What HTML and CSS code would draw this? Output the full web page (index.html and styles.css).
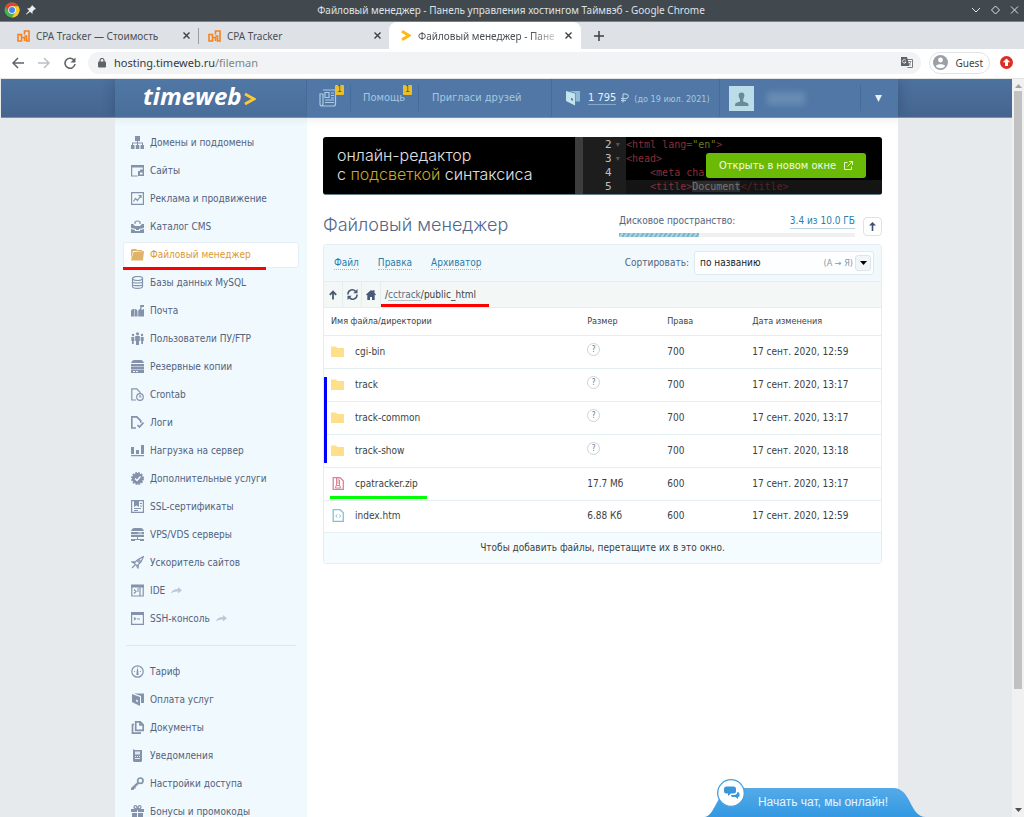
FILE: index.html
```html
<!DOCTYPE html>
<html lang="ru">
<head>
<meta charset="utf-8">
<title>Файловый менеджер - Панель управления хостингом Таймвэб</title>
<link rel="stylesheet" href="styles.css">
</head>
<body>
<header class="titlebar">
  <svg class="chrome" width="16" height="16" viewBox="0 0 16 16"><circle cx="8" cy="8" r="7.5" fill="#4caf50"/><path d="M1.5 4.2A7.5 7.5 0 0 1 14.5 4.2H8L5 9.8z" fill="#e74133"/><path d="M14.5 4.2A7.5 7.5 0 0 1 8 15.5L11.3 9.8 8 4.2z" fill="#fbc926"/><circle cx="8" cy="8" r="3.8" fill="#fff"/><circle cx="8" cy="8" r="3" fill="#4285f4"/></svg>
  <svg class="pin" width="10" height="10" viewBox="0 0 10 10"><path d="M6 0l4 4-1.5.5-2 2L6.500 9 4 6.800.5 9.500 0 9l3.200-3.200L1 3.500l2.500-.2 2-2z" fill="#eee"/></svg>
  <span class="window-title">Файловый менеджер - Панель управления хостингом Таймвэб - Google Chrome</span>
  <svg class="win-buttons" width="50" height="10" viewBox="0 0 50 10" fill="none" stroke="#dfe3e6" stroke-width="1"><path d="M2 3l4 4 4-4M25.500 1l4 4-4 4-4-4zM41 1.500l7 7m0-7l-7 7"/></svg>
</header>
<nav class="tabs">
  <div class="tab tab-plain"><svg width="13" height="12" viewBox="0 0 13 12"><path d="M1 11V4.500h3.500V11zM4.500 11V7.500h3V11M7.500 4.500V1H12v10H9.500V6H7.500" fill="none" stroke="#f58220" stroke-width="1.600"/></svg><span>CPA Tracker — Стоимость</span><button class="close" aria-label="Закрыть"><svg width="7" height="7" viewBox="0 0 7 7"><path d="M.5.5l6 6m0-6l-6 6"/></svg></button></div>
  <div class="tab tab-plain tab-second"><svg width="13" height="12" viewBox="0 0 13 12"><path d="M1 11V4.500h3.500V11zM4.500 11V7.500h3V11M7.500 4.500V1H12v10H9.500V6H7.500" fill="none" stroke="#f58220" stroke-width="1.600"/></svg><span>CPA Tracker</span><button class="close" aria-label="Закрыть"><svg width="7" height="7" viewBox="0 0 7 7"><path d="M.5.5l6 6m0-6l-6 6"/></svg></button></div>
  <div class="tab tab-active"><svg width="10" height="11" viewBox="0 0 10 11"><path d="M1 1.200l7 4.300-7 4.300" fill="none" stroke="#fdb913" stroke-width="2.800"/></svg><span class="fade">Файловый менеджер - Пане</span><button class="close" aria-label="Закрыть"><svg width="7" height="7" viewBox="0 0 7 7"><path d="M.5.5l6 6m0-6l-6 6"/></svg></button></div>
  <button class="new-tab" aria-label="Новая вкладка"><svg width="10" height="10" viewBox="0 0 10 10"><path d="M5 0v10M0 5h10" stroke="#3c4043" stroke-width="1.500"/></svg></button>
</nav>
<div class="addressbar">
  <button class="nav" aria-label="Назад"><svg width="12" height="12" viewBox="0 0 12 12"><path d="M12 6H1M6 1L1 6l5 5" fill="none" stroke="#5f6368" stroke-width="1.500"/></svg></button>
  <button class="nav" aria-label="Вперёд"><svg width="12" height="12" viewBox="0 0 12 12"><path d="M0 6h11M6 1l5 5-5 5" fill="none" stroke="#bcbfc3" stroke-width="1.500"/></svg></button>
  <button class="nav" aria-label="Обновить"><svg width="12" height="12" viewBox="0 0 12 12"><path d="M10.200 3.500A5 5 0 1 0 11 7" fill="none" stroke="#5f6368" stroke-width="1.600"/><path d="M11.500.5v5h-5z" fill="#5f6368"/></svg></button>
  <div class="omnibox">
    <svg width="8" height="10" viewBox="0 0 8 10"><rect y="3.500" width="8" height="6" rx="1" fill="#5f6368"/><path d="M2 4V2.500a2 2 0 0 1 4 0V4" fill="none" stroke="#5f6368" stroke-width="1.200"/></svg>
    <span class="url">hosting.timeweb.ru<span class="url-path">/fileman</span></span>
    <svg class="translate" width="12" height="11" viewBox="0 0 12 11"><path d="M5 2.500h6.500v8H6.500" fill="#fff" stroke="#777b80"/><path d="M0 0h6l2.500 9H0z" fill="#5f6368"/><path d="M4.800 3.300A1.800 1.800 0 1 0 5 5H3.500" fill="none" stroke="#fff" stroke-width=".8"/><path d="M7 4.500h3.500M9.500 4.500c0 2-1 3-2 3.500m.5-2l2 2.500" fill="none" stroke="#777b80" stroke-width=".8"/></svg>
  </div>
  <button class="guest"><svg width="15" height="15" viewBox="0 0 15 15"><circle cx="7.500" cy="7.500" r="7.500" fill="#9aa0a6"/><circle cx="7.500" cy="5" r="2.400" fill="#fff"/><path d="M2.800 11c1-2.500 8.400-2.500 9.400 0-2 3-7.400 3-9.400 0z" fill="#fff"/></svg>Guest</button>
  <button class="update" aria-label="Обновление"><svg width="13" height="13" viewBox="0 0 13 13"><circle cx="6.500" cy="6.500" r="6.500" fill="#d93025"/><path d="M6.500 2.500l3.700 3.700H8V10H5V6.200H2.800z" fill="#fff"/></svg></button>
</div>
<div class="viewport">
<div class="page">
  <header class="site-header">
    <div class="header-inner">
      <a class="logo" href="#">timeweb<svg width="12" height="14" viewBox="0 0 12 14"><path d="M1 2l9 5-9 5" fill="none" stroke="#fecb2f" stroke-width="2.600"/></svg></a>
      <a class="h-item news" href="#" aria-label="Новости"><svg width="18" height="18" viewBox="0 0 18 18" fill="none" stroke="#a9cbe3" stroke-width="1.200"><path d="M4 1h12.500v14q0 2-2 2H3q-2 0-2-2V5h3v10q0 1-1 1.500"/><path d="M6 3.500h4v5H6zM12 4h3M12 6.500h3M12 9h3M6 11h9M6 13.500h9"/></svg><span class="badge">1</span></a>
      <a class="h-item help" href="#">Помощь<span class="badge">1</span></a>
      <a class="h-item invite" href="#">Пригласи друзей</a>
      <div class="h-item balance"><svg width="14" height="16" viewBox="0 0 14 16"><path d="M3 1h11v10.500h-4.500V3z" fill="#8fbbd5"/><path d="M0 1l9 2.500v12L0 11z" fill="#c3e3ee"/><path d="M5 8l2 .7v2L5 10z" fill="#5077a5"/></svg><a class="sum" href="#">1 795</a><svg class="rub" width="8" height="10" viewBox="0 0 8 10"><path d="M2 9.500V1h3a2.300 2.300 0 0 1 0 4.600H0M0 7.600h5" fill="none" stroke="#c1dced"/></svg><small>(до 19 июл. 2021)</small></div>
      <div class="h-item user"><svg class="avatar" width="25" height="25" viewBox="0 0 25 25"><rect width="25" height="25" fill="#bbdde9"/><path d="M10 7.500q2.700-2 5 0 1 2.500-.3 4.500l-.5 1.500v2l4.500 1.500q.8.500.8 3H6q0-2.500.8-3l4.200-1.500v-2l-.7-1.500q-1.200-2-.3-4.500z" fill="#6b8a98"/></svg><i class="hidden-name"></i></div>
      <button class="h-item drop" aria-label="Меню"><svg width="7" height="7" viewBox="0 0 7 7"><path d="M0 0h7L3.500 7z" fill="#e4f0f8"/></svg></button>
    </div>
  </header>
  <div class="container">
    <aside class="sidebar">
      <a href="#"><svg viewBox="0 0 13 13"><path d="M4 0h5v5H4zM0 9h3.500v4H0zM4.800 9h3.500v4H4.800zM9.500 9H13v4H9.500zM6 5h1v4H6zM1 6.500h11V9h-1V7.500H2V9H1z"/></svg>Домены и поддомены</a>
      <a href="#"><svg viewBox="0 0 13 13"><path d="M0 1h13v2.500H0z"/><path class="s" d="M.6 2v10h6M12.400 3v3"/><path d="M7 7h2V5.500h4V12H7z"/><path d="M9 8.500h2.500v2H9z" fill="#f0f9fd"/></svg>Сайты</a>
      <a href="#"><svg viewBox="0 0 13 13"><path class="s" d="M.6.6h11.800v11.800H.6zM2.500 9.500l2-3 2 2 3-4.500M7.500 3.500H10V6"/></svg>Реклама и продвижение</a>
      <a href="#"><svg viewBox="0 0 13 13"><path class="s" d="M4 4V2q2.500-2 5 0v2"/><path d="M0 4h2l2 2h5l2-2h2v4l-5 1v1H5V9L0 8zM0 9l4 1v1h5v-1l4-1v4H0z"/></svg>Каталог CMS</a>
      <a class="current" href="#"><svg viewBox="0 0 13 13"><path d="M0 2l1-1h4l1 1h5v1H2L0 11z"/><path d="M2.500 4L13 3l-1 9.500H0z"/></svg>Файловый менеджер</a>
      <a href="#"><svg viewBox="0 0 13 13"><ellipse class="s" cx="6.500" cy="2.500" rx="5" ry="2"/><path class="s" d="M1.500 2.500v8c0 2.500 10 2.500 10 0v-8M1.500 5.500c0 2 10 2 10 0M1.500 8.200c0 2 10 2 10 0"/></svg>Базы данных MySQL</a>
      <a href="#"><svg viewBox="0 0 13 13"><path d="M0 7.500q0-2.500 2.500-2.500H3v7.500H0zM3.500 5Q6.500 4.500 6.500 7.500v5h-3zM7.200 12.500V6.500l2-2V1H13v2h-2.500v3l2.500-1v7.500z"/></svg>Почта</a>
      <a href="#"><svg viewBox="0 0 13 13"><circle cx="6.500" cy="1.800" r="1.600"/><circle cx="2" cy="3" r="1.200"/><circle cx="11" cy="3" r="1.200"/><path d="M4.200 4h4.600v5H8v4H5V9h-.8zM.3 5h3v4h-.6v3H1V9H.3zM9.700 5h3v4H12v3h-1.700V9h-.6z"/></svg>Пользователи ПУ/FTP</a>
      <a href="#"><svg viewBox="0 0 13 13"><path d="M0 3q1-3 3-3h7q2 0 3 3zM0 4h13v2.400H0zM0 7h13v2.400H0zM0 10h13v3H0z"/><path d="M2 11h2v1H2zM5 11h2v1H5z" fill="#f0f9fd"/></svg>Резервные копии</a>
      <a href="#"><svg viewBox="0 0 13 13"><path class="s" d="M5 12H.8V.8h5l3.700 4" stroke-width="1.500"/><circle class="s" cx="9" cy="9" r="3.300"/><path class="s" d="M9 7v2h1.500"/></svg>Crontab</a>
      <a href="#"><svg viewBox="0 0 13 13"><path class="s bold" d="M5 12H.8V.8h5l4 4v2"/><path class="s bold" d="M6.500 9l2 2 4-4.500"/></svg>Логи</a>
      <a href="#"><svg viewBox="0 0 13 13"><path d="M0 3h3v7H0zM5 6h3v4H5zM10 1h3v9h-3zM0 11h13v1.200H0z"/></svg>Нагрузка на сервер</a>
      <a href="#"><svg viewBox="0 0 13 13"><circle cx="6.500" cy="6.500" r="5.400"/><circle cx="6.500" cy="6.500" r="5.500" fill="none" stroke="#8493ab" stroke-dasharray="1.700 1.180" stroke-width="2"/><path d="M4 6.500l2 2 3.500-4" fill="none" stroke="#fff" stroke-width="1.300"/></svg>Дополнительные услуги</a>
      <a href="#"><svg viewBox="0 0 13 13"><path class="s" d="M.6.6h11.800v11.800H.6zM9 3.500h2M9 6h2M3 8.500h7M3 10.500h4"/><path d="M3 1h5v6L5.500 5.500 3 7z"/></svg>SSL-сертификаты</a>
      <a href="#"><svg viewBox="0 0 13 13"><path d="M0 3q1-3 3-3h7q2 0 3 3zM0 4h13v2.200H0zM0 7h13v2H0zM6 9h1v2h6v2H9v-1H4v1H0v-2h6z"/><path d="M7 4.500h4v1H7z" fill="#d5dee8"/></svg>VPS/VDS серверы</a>
      <a href="#"><svg viewBox="0 0 13 13"><path class="s" d="M3 7L7 3.500 12.500.5 10 6 6 10zM3.500 5.500L1 6l2 1M7.500 9.500L7 12l-1.500-2M1 12l3-3"/><circle class="s" cx="8" cy="5" r="1.200"/></svg>Ускоритель сайтов</a>
      <a href="#"><svg viewBox="0 0 13 13"><path d="M0 .5h13v3H0z"/><path class="s" d="M.8 2v10h11.400V2M9 3v9M3 5.500l2 2-2 2M6 5h2M6 7h2"/></svg>IDE<svg class="ext" viewBox="0 0 11 7"><path d="M0 6.500Q1 2 7 2V0l4 3.200-4 3.300v-2Q3 4 0 6.500z"/></svg></a>
      <a href="#"><svg viewBox="0 0 13 13"><path d="M0 0h13v3H0z"/><path class="s" d="M.6 2v10.300h11.800V2M3 5.500l1.500 1.200L3 8M6 7h3"/></svg>SSH-консоль<svg class="ext" viewBox="0 0 11 7"><path d="M0 6.500Q1 2 7 2V0l4 3.200-4 3.300v-2Q3 4 0 6.500z"/></svg></a>
      <hr>
      <a href="#"><svg viewBox="0 0 13 13"><circle class="s" cx="6.500" cy="6.500" r="5.700"/><path d="M6 4h1l.7 6H5.300z"/><circle cx="3.500" cy="6.500" r=".6"/><circle cx="9.500" cy="6.500" r=".6"/><circle cx="6.500" cy="2.800" r=".6"/></svg>Тариф</a>
      <a href="#"><svg viewBox="0 0 13 13"><path d="M1 1l8 3v9l-8-4zM3 .5h10v9.500h-3V3z"/><path d="M5 6.500l2 .7v2L5 8.500z" fill="#dfe8f0"/></svg>Оплата услуг</a>
      <a href="#"><svg viewBox="0 0 13 13"><path class="s bold" d="M4.700.8h4.500l3 3v5.500H4.700zM9 1v3h3M3 3.500H1.500v8.700H9V11"/></svg>Документы</a>
      <a href="#"><svg viewBox="0 0 13 13"><path d="M2 1q0-1 1-1v1h8v11l-1 1H3l-1-1z"/><path d="M4 2.500h5v3H4zM4 7h1v1H4zM6 7h1v1H6zM8 7h1v1H8zM4 9h5v1H4z" fill="#dfe8f0"/></svg>Уведомления</a>
      <a href="#"><svg viewBox="0 0 13 13"><circle class="s bold" cx="9.300" cy="3.700" r="2.700"/><path d="M6.500 5L8 6.700 4.500 10l.3 1.600H3.300L2.500 13H0v-2z"/></svg>Настройки доступа</a>
      <a href="#"><svg viewBox="0 0 13 13"><path d="M0 4h6v3H0zM7 4h6v3H7zM1 8h5v5H1zM7 8h5v5H7z"/><path class="s" d="M6.500 4Q3 4 3 2t2.500-1l1 3 1-3Q10 0 10 2T6.500 4"/></svg>Бонусы и промокоды</a>
      <i class="mark mark-menu"></i>
    </aside>
    <main class="content">
      <section class="banner">
        <p class="banner-text">онлайн-редактор<br>с <b>подсветкой</b> синтаксиса</p>
        <div class="editor">
          <div class="gutter"><span>2<i>▾</i></span><span>3<i>▾</i></span><span>4</span><span>5</span></div>
          <pre class="code"><span>&lt;html lang<em>=</em><q>"en"</q>&gt;</span><span>&lt;head&gt;</span><span>    &lt;meta cha</span><span class="line">    &lt;title&gt;<mark>Document</mark><s>&lt;/title&gt;</s></span></pre>
          <button class="open">Открыть в новом окне<svg width="9" height="9" viewBox="0 0 9 9"><path d="M3.500 1.500h-3v7h7v-3M5 .5h3.500V4M8.500.5l-5 5" fill="none" stroke="#e8f5d0"/></svg></button>
        </div>
      </section>
      <div class="heading">
        <h1>Файловый менеджер</h1>
        <div class="disk">
          <div class="disk-text"><span>Дисковое пространство:</span><a href="#">3.4 из 10.0 ГБ</a></div>
          <div class="meter"><i></i></div>
        </div>
        <button class="upload" aria-label="Загрузить"><svg width="7" height="9" viewBox="0 0 7 9"><path d="M3.500 0L7 3.500H4.300V9H2.700V3.500H0z" fill="#3d5170"/></svg></button>
      </div>
      <section class="panel">
        <div class="toolbar">
          <a href="#">Файл</a><a href="#">Правка</a><a href="#">Архиватор</a>
          <label for="sort">Сортировать:</label>
          <div class="select"><select id="sort"><option>по названию</option></select><span class="order">(А → Я)</span><span class="arrow"><svg width="7" height="4" viewBox="0 0 7 4"><path d="M0 0h7L3.500 4z"/></svg></span></div>
        </div>
        <div class="path">
          <button aria-label="Вверх"><svg width="8" height="10" viewBox="0 0 8 10"><path d="M4 9.500V2M.8 4.800L4 1.500l3.200 3.300" fill="none" stroke="#485a78" stroke-width="1.800"/></svg></button>
          <button aria-label="Обновить"><svg width="11" height="11" viewBox="0 0 11 11"><path d="M1 5.500A4.300 4.300 0 0 1 9 3M10 5.500A4.300 4.300 0 0 1 2 8" fill="none" stroke="#485a78" stroke-width="1.500"/><path d="M10.500 0v4.200H6.300zM.5 11V6.800h4.200z" fill="#485a78"/></svg></button>
          <button aria-label="Домой"><svg width="10" height="10" viewBox="0 0 10 10"><path d="M5 0l1.500 1.300V.3h2v2.800L10 4.500l-.7.700L8.700 5v5H6V7H4v3H1.300V5L.7 5.200 0 4.500z" fill="#485a78"/></svg></button>
          <div class="crumbs">/<a href="#">cctrack</a>/public_html<i class="mark mark-path"></i></div>
        </div>
        <div class="files">
        <table>
          <thead><tr><th class="c-name">Имя файла/директории</th><th class="c-size">Размер</th><th class="c-mode">Права</th><th>Дата изменения</th></tr></thead>
          <tbody>
            <tr><td><svg viewBox="0 0 13 13"><path d="M0 1.500h5l1.500 1.500H13v9H0z" fill="#ffe08a"/></svg>cgi-bin</td><td><button class="q">?</button></td><td>700</td><td>17 сент. 2020, 12:59</td></tr>
            <tr><td><svg viewBox="0 0 13 13"><path d="M0 1.500h5l1.500 1.500H13v9H0z" fill="#ffe08a"/></svg>track</td><td><button class="q">?</button></td><td>700</td><td>17 сент. 2020, 13:17</td></tr>
            <tr><td><svg viewBox="0 0 13 13"><path d="M0 1.500h5l1.500 1.500H13v9H0z" fill="#ffe08a"/></svg>track-common</td><td><button class="q">?</button></td><td>700</td><td>17 сент. 2020, 13:17</td></tr>
            <tr><td><svg viewBox="0 0 13 13"><path d="M0 1.500h5l1.500 1.500H13v9H0z" fill="#ffe08a"/></svg>track-show</td><td><button class="q">?</button></td><td>700</td><td>17 сент. 2020, 13:18</td></tr>
            <tr><td><svg viewBox="0 0 13 13" fill="none" stroke="#dc8494"><path d="M2.200.7H9l3.300 3v8.600H2.200z" stroke-width="1.300"/><path d="M5.500 2h3M5.500 4h3M5.500 6h3M5.500 1v7M8.500 3v5M5 8.500h4l.5 2.500h-5z"/></svg>cpatracker.zip<i class="mark mark-zip"></i></td><td>17.7 Мб</td><td>600</td><td>17 сент. 2020, 13:17</td></tr>
            <tr><td><svg viewBox="0 0 13 13" fill="none" stroke="#84bfd8"><path d="M2.200.7H9l3.300 3v8.600H2.200z" stroke-width="1.300"/><path d="M6.300 5.500L4.700 7l1.600 1.500M8.200 5.500L9.800 7 8.200 8.500"/></svg>index.htm</td><td>6.88 Кб</td><td>600</td><td>17 сент. 2020, 12:59</td></tr>
          </tbody>
        </table>
        <i class="mark mark-dirs"></i>
        </div>
        <p class="drop-hint">Чтобы добавить файлы, перетащите их в это окно.</p>
      </section>
    </main>
  </div>
</div>
<div class="scrollbar"><svg width="7" height="4" viewBox="0 0 7 4"><path d="M0 4h7L3.500 0z" fill="#a3a3a3"/></svg><i></i><svg width="7" height="4" viewBox="0 0 7 4"><path d="M0 0h7L3.500 4z" fill="#505050"/></svg></div>
<button class="chat">
  <svg class="chat-shape" width="222" height="39" viewBox="0 0 222 39"><defs><linearGradient id="g" x2="0" y2="1"><stop offset="0" stop-color="#55aae8"/><stop offset="1" stop-color="#3399e2"/></linearGradient></defs><path d="M0 39c12 0 12-29 32-29h157c19 0 16 29 33 29z" fill="url(#g)"/><circle cx="27" cy="15" r="13.300" fill="#fff" stroke="#459fdd" stroke-width="1.300"/><path d="M22.500 8.500h7q2.500 0 2.500 2.500v2q0 2.500-2.500 2.500H27L24 18v-2.500h-1.500Q20 15.500 20 13v-2q0-2.500 2.500-2.500z" fill="#3a96db"/><path d="M33.500 14q2 .2 2 2v1.500q0 1.500-1.500 1.500v2l-2.500-2h-3q-1.500 0-1.500-2h3q3 0 3.500-3z" fill="#3a96db"/></svg>
  <span>Начать чат, мы онлайн!</span>
</button>
</div>
</body>
</html>
```
FILE: styles.css
```css
* { box-sizing: border-box; }
body {
  margin: 0; height: 100vh; overflow: hidden;
  display: flex; flex-direction: column;
  font: 10px/14px "DejaVu Sans Condensed", "Noto Sans", sans-serif;
  color: #3b3f45;
}
a { color: inherit; text-decoration: none; }
button { border: 0; background: none; padding: 0; font: inherit; color: inherit; display: flex; align-items: center; justify-content: center; }
svg { flex: none; }

.titlebar { flex: none; height: 22px; display: flex; align-items: center; gap: 6px; padding: 0 4px 2px; background: #41494f; border-bottom: 1px solid #7b8084; color: #dfe1e2; font: 10px/14px "Noto Sans", sans-serif; }
.window-title { flex: 1; text-align: center; padding-left: 16px; }

.tabs { flex: none; height: 27px; display: flex; background: #dee1e6; font: 10px/14px "Noto Sans", sans-serif; color: #4b4f54; }
.tab { display: flex; align-items: center; gap: 6px; padding: 0 6px 0 17px; height: 27px; }
.tab span { flex: 1; white-space: nowrap; }
.tab-plain { width: 198px; }
.tab-second { width: 191px; padding-left: 10px; background: linear-gradient(#9a9ea3, #9a9ea3) 0 50% / 1px 16px no-repeat; }
.tab-active { width: 192px; padding: 0 7px 0 12px; background: #fff; border-radius: 8px 8px 0 0; gap: 7px; }
.tab .fade { -webkit-mask-image: linear-gradient(90deg, #000 82%, rgba(0, 0, 0, .2)); mask-image: linear-gradient(90deg, #000 82%, rgba(0, 0, 0, .2)); }
.close { width: 7px; height: 7px; margin: 0 2px; }
.close svg { stroke: #3c4043; stroke-width: 1.4; }
.new-tab { width: 36px; }

.addressbar { flex: none; height: 30px; display: flex; align-items: center; gap: 8px; padding: 0 10px 2px; background: #fff; font: 11px/16px "Noto Sans", sans-serif; border-bottom: 1px solid #e3e3e3; }
.nav { width: 16px; height: 16px; margin-right: 2px; }
.omnibox { flex: 1; height: 22px; display: flex; align-items: center; gap: 8px; padding: 0 8px 0 10px; border-radius: 11px; background: #f1f3f4; color: #36393d; }
.url { flex: 1; }
.url-path { color: #80868b; }
.guest { height: 22px; gap: 8px; padding: 0 6px 0 3px; border: 1px solid #e1e3e6; border-radius: 11px; font-size: 10px; }
.update { width: 16px; }

.viewport { position: relative; flex: 1; min-height: 0; display: flex; background: #e6eaed; }
.page { flex: 1; min-width: 0; height: 100%; padding-left: 1px; overflow: hidden; }
.site-header { height: 39px; background: linear-gradient(#4d729e, #45658f); border-bottom: 1px solid #7592b4; }
.header-inner { width: 783px; height: 38px; margin: 0 auto; display: flex; align-items: stretch; background: #5077a5; box-shadow: 0 0 14px rgba(30, 55, 90, .4); color: #a5c8e1; clip-path: inset(0 -14px); }
.logo { width: 192px; display: flex; align-items: center; gap: 2px; padding: 0 0 5px 28px; color: #fff; background: linear-gradient(#5077a5, #4a6e9a); font: italic 700 24px/26px "Open Sans", sans-serif; border-right: 1px solid #476a96; }
.logo svg { margin-top: 7px; }
.h-item { display: flex; align-items: center; position: relative; font-size: 11px; background: linear-gradient(#476b98, #476b98) 100% 50% / 1px 26px no-repeat; }
.news { width: 44px; padding-left: 12px; }
.help { width: 68px; padding-left: 12px; }
.invite { flex: 1; padding-left: 13px; background-size: 1px 38px; white-space: nowrap; }
.badge { position: absolute; top: 6px; right: 7px; width: 9px; height: 10px; border-radius: 1px; background: #e9bd2b; color: #644c10; font-size: 8px; line-height: 10px; text-align: center; }
.balance { width: 168px; padding-left: 14px; gap: 8px; background-size: 1px 38px; }
.sum { color: #e4f2fa; border-bottom: 1px solid #83a8c9; line-height: 13px; }
.balance .rub { margin-left: -3px; }
.balance small { font-size: 9px; margin-left: -3px; padding-top: 2px; white-space: nowrap; }
.user { width: 141px; padding-left: 9px; gap: 13px; }
.hidden-name { width: 38px; height: 13px; background: #85a6c6; opacity: .45; filter: blur(3px); }
.drop { width: 37px; padding-right: 3px; background: none; }

.container { width: 783px; min-height: 100%; margin: 0 auto; display: flex; background: #fff; }
.sidebar { position: relative; width: 192px; flex: none; padding: 12px 8px 0; display: flex; flex-direction: column; gap: 2px; background: linear-gradient(#e8f0f4, #f0f9fd 8px); color: #52627d; }
.sidebar a { flex: none; height: 26px; display: flex; align-items: center; gap: 6px; padding: 0 7px; border: 1px solid transparent; border-radius: 3px; white-space: nowrap; }
.sidebar svg { width: 13px; height: 13px; margin-bottom: 1px; fill: #8493ab; }
.sidebar .s { fill: none; stroke: #8493ab; stroke-width: 1.2; }
.sidebar .bold { stroke-width: 1.7; }
.sidebar .ext { width: 11px; height: 7px; fill: #bbc9d9; }
.sidebar .current { background: #fff; border-color: #e4eef4; color: #d99a32; }
.sidebar .current svg { fill: #dfb469; }
.sidebar hr { width: auto; flex: none; margin: 11px 3px; border: 0; border-top: 1px solid #e0e8ec; }
.mark { position: absolute; height: 3px; background: #f00; }
.mark-menu { left: 8px; width: 143px; top: 149px; }

.content { flex: 1; min-width: 0; padding: 19px 16px 0; background: linear-gradient(#f3f4f5, #fff 8px); }
.banner { height: 58px; display: flex; border-radius: 3px; overflow: hidden; background: #000; border-bottom: 1px solid #66808c; }
.banner-text { flex: 1; margin: 0; padding: 9px 0 0 14px; color: #e0e0e0; font: 300 16px/19px Inter, sans-serif; white-space: nowrap; }
.banner-text b { font-weight: 300; color: #c7a92c; }
.editor { position: relative; width: 307px; display: flex; border-left: 8px solid #3d3d3d; font: 11px/14px "DejaVu Sans Mono", monospace; }
.gutter { width: 43px; padding: 1px 0 0 22px; background: #1d1d1d; color: #c0c0c0; }
.gutter span { display: flex; gap: 4px; }
.gutter i { font: 8px/13px "DejaVu Sans", sans-serif; color: #555; }
.code { flex: 1; margin: 0; padding-top: 1px; font: 10px/14px "DejaVu Sans Mono", monospace; color: #8c2d36; }
.code span { display: block; }
.code .line { background: #141414; }
.code em { font-style: normal; color: #a01850; }
.code q { quotes: none; color: #6d7a25; }
.code q::before, .code q::after { content: none; }
.code mark { background: #2b2b2b; color: #777; }
.code s { text-decoration: none; color: #5a2226; }
.open { position: absolute; right: 16px; top: 16px; width: 160px; height: 25px; gap: 8px; border-radius: 3px; background: #6bba05; color: #f2fbe4; font: 11px/14px "DejaVu Sans Condensed", sans-serif; white-space: nowrap; }

.heading { height: 49px; display: flex; align-items: flex-start; }
h1 { flex: 1; margin: 0; padding-top: 18px; color: #52688a; font: 300 18px/24px Inter, sans-serif; }
.disk { width: 236px; padding-top: 19px; }
.disk-text { display: flex; justify-content: space-between; color: #53647e; white-space: nowrap; }
.disk-text a { color: #2d7cae; border-bottom: 1px solid #b9d5e5; }
.meter { margin-top: 4px; height: 4px; background: #eef0f1; }
.meter i { display: block; width: 34%; height: 4px; background: repeating-linear-gradient(120deg, #79b8cf 0 2px, #a8d3e1 2px 4px); }
.upload { width: 19px; height: 19px; margin: 22px 0 0 8px; border: 1px solid #d7e4ea; border-radius: 4px; background: #fff; }

.panel { border: 1px solid #e2eef3; border-radius: 3px; }
.toolbar { height: 36px; display: flex; align-items: center; padding: 0 7px 0 10px; gap: 19px; background: #f1f9fd; color: #53647e; }
.toolbar a { color: #2a7cab; border-bottom: 1px dotted #8fbdd6; line-height: 12px; }
.toolbar label { margin-left: auto; margin-right: -14px; }
.select { position: relative; width: 180px; height: 24px; }
.select select { width: 100%; height: 24px; appearance: none; padding: 0 5px; border: 1px solid #dfeaf0; border-radius: 3px; background: #fcfeff; font: inherit; color: #222; }
.order { position: absolute; right: 21px; top: 5px; color: #8398a8; font-size: 9px; }
.arrow { position: absolute; right: 3px; top: 4px; width: 16px; height: 16px; display: flex; align-items: center; justify-content: center; border: 1px solid #dbe5ea; border-radius: 3px; background: #f2f6f8; }
.path { height: 27px; display: flex; align-items: stretch; background: #f3f8f7; border: solid #e3efef; border-width: 1px 0; }
.path button { width: 19px; border-right: 1px solid #e3efef; }
.crumbs { position: relative; padding: 6px 4px; }
.crumbs a { color: #5e6c84; border-bottom: 1px solid #b8c2cc; }
.mark-path { left: 0; top: 22px; width: 108px; }
.files { position: relative; }
table { width: 100%; table-layout: fixed; border-collapse: collapse; }
th, td { position: relative; padding: 0 0 0 7px; text-align: left; font-weight: 400; border-bottom: 1px solid #e3eff1; white-space: nowrap; }
th { height: 27px; font-size: 9px; }
td { height: 33px; }
tr:last-child td { height: 32px; }
.c-name { width: 46%; } .c-size { width: 80px; } .c-mode { width: 85px; }
td svg { width: 13px; height: 13px; margin-right: 11px; vertical-align: -3px; }
.q { width: 13px; height: 13px; margin-bottom: 4px; border: 1px solid #c9d5dc; border-radius: 50%; font-size: 8px; line-height: 8px; color: #687481; }
.mark-dirs { left: 0; top: 69px; width: 3px; height: 86px; background: #00f; }
.mark-zip { left: 6px; top: 28px; width: 97px; background: #0f0; }
.drop-hint { margin: 0; padding: 8px 0; text-align: center; background: #f5fcff; }

.scrollbar { flex: none; width: 12px; display: flex; flex-direction: column; align-items: center; padding: 5px 0; gap: 3px; background: #f1f1f1; }
.scrollbar i { width: 8px; flex: 0 1 598px; margin-bottom: auto; background: #c1c1c1; }
.chat { position: absolute; right: 98px; bottom: 0; width: 222px; height: 39px; color: #e5f3fd; font: 12px/14px "Liberation Sans", sans-serif; }
.chat-shape { position: absolute; left: 0; top: 0; }
.chat span { position: relative; padding: 9px 0 0 16px; }
```
